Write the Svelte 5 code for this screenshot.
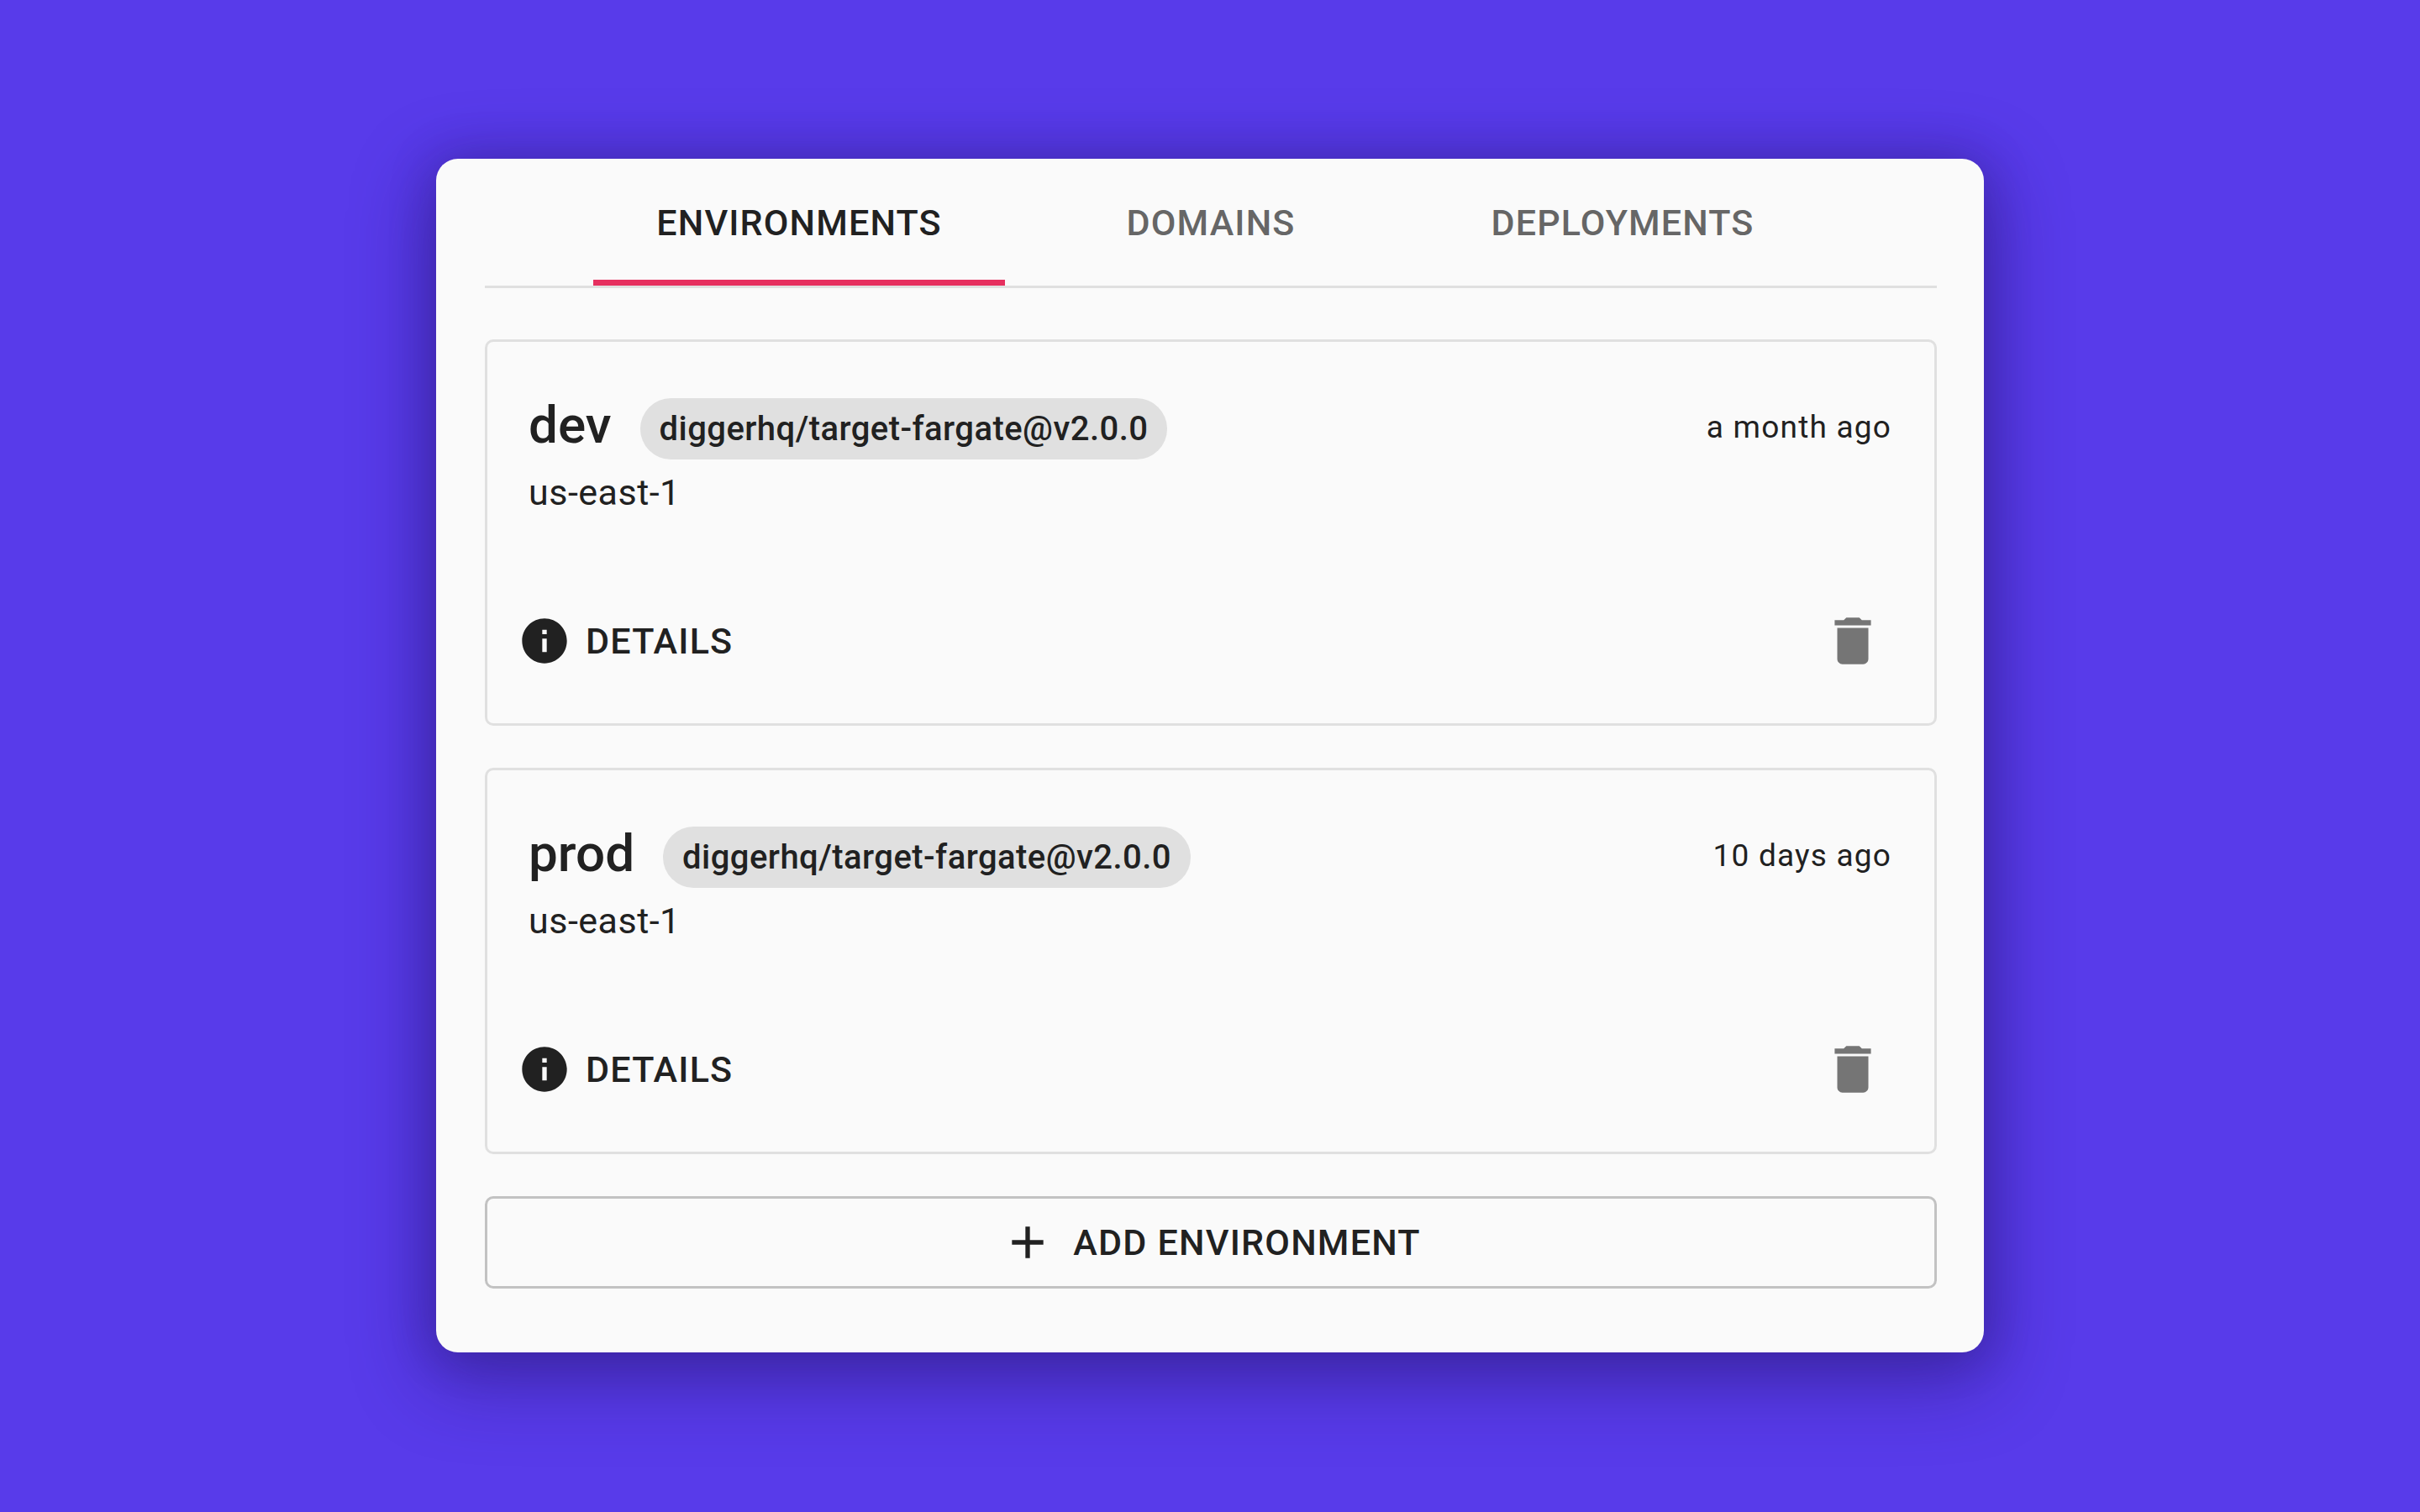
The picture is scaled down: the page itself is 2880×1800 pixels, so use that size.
<script>
  const envs = [
    { name: 'dev', version: 'diggerhq/target-fargate@v2.0.0', region: 'us-east-1', time: 'a month ago' },
    { name: 'prod', version: 'diggerhq/target-fargate@v2.0.0', region: 'us-east-1', time: '10 days ago' }
  ];
  const tabs = ['ENVIRONMENTS', 'DOMAINS', 'DEPLOYMENTS'];
</script>

<div class="page">
  <main class="panel">
    <nav class="tabs">
      {#each tabs as tab, i}
        <div class="tab" class:active={i === 0}>{tab}</div>
      {/each}
    </nav>
    <section class="list">
      {#each envs as env}
        <article class="env">
          <div class="head">
            <div class="title">
              <h2>{env.name}</h2>
              <span class="chip">{env.version}</span>
            </div>
            <span class="time">{env.time}</span>
          </div>
          <div class="region">{env.region}</div>
          <div class="actions">
            <div class="details">
              <svg class="info" viewBox="0 0 24 24"><path d="M12 2C6.48 2 2 6.48 2 12s4.48 10 10 10 10-4.48 10-10S17.52 2 12 2zm1 15h-2v-6h2v6zm0-8h-2V7h2v2z" /></svg>
              <span>DETAILS</span>
            </div>
            <svg class="trash" viewBox="0 0 24 24"><path d="M6 19c0 1.1.9 2 2 2h8c1.1 0 2-.9 2-2V7H6v12zM19 4h-3.5l-1-1h-5l-1 1H5v2h14V4z" /></svg>
          </div>
        </article>
      {/each}
      <div class="add">
        <svg class="plus" viewBox="0 0 24 24"><path d="M19 13h-6v6h-2v-6H5v-2h6V5h2v6h6v2z" /></svg>
        <span>ADD ENVIRONMENT</span>
      </div>
    </section>
  </main>
</div>

<style>
  :global(body) { margin: 0; background: #583bea; }
  .page {
    width: 2880px; height: 1800px; box-sizing: border-box; padding-top: 189px;
    display: flex; align-items: flex-start; justify-content: center;
    font-family: Roboto, sans-serif; color: #212121;
  }
  .panel {
    width: 1842px; height: 1421px; box-sizing: border-box; padding: 0 56px 0 58px;
    background: #fafafa; border-radius: 26px;
    box-shadow: 0 26px 90px 10px rgba(30, 15, 90, 0.42), 0 0 50px 8px rgba(30, 15, 90, 0.18);
  }
  .tabs {
    display: flex; justify-content: center; height: 154px; box-sizing: border-box;
    border-bottom: 3px solid #e0e0e0;
  }
  .tab {
    width: 490px; box-sizing: border-box; height: 151px; padding-top: 8px;
    display: flex; align-items: center; justify-content: center;
    font-size: 43px; font-weight: 500; letter-spacing: 1.15px; color: #666;
    border-bottom: 7px solid transparent;
  }
  .tab.active { color: #212121; border-bottom-color: #e6305f; }
  .list { display: flex; flex-direction: column; padding-top: 61px; }
  .env {
    height: 460px; box-sizing: border-box; margin-bottom: 50px;
    border: 3px solid #e0e0e0; border-radius: 10px;
    padding: 65px 51px 0 49px;
    display: flex; flex-direction: column;
  }
  .head { display: flex; align-items: center; justify-content: space-between; height: 76px; }
  .title { display: flex; align-items: center; }
  h2 { margin: 0; font-size: 62px; font-weight: 500; line-height: 1; position: relative; top: -4px; }
  .chip {
    margin-left: 34px; height: 73px; padding: 0 23px; border-radius: 37px;
    background: #e0e0e0; display: flex; align-items: center;
    font-size: 40px; font-weight: 500; letter-spacing: 0.45px;
  }
  .time { font-size: 37px; letter-spacing: 1.2px; color: #212121; position: relative; top: -2px; }
  .region { margin-top: 6px; font-size: 43px; letter-spacing: 0.5px; line-height: 64px; }
  .actions { margin-top: 113px; margin-left: -13px; display: flex; align-items: center; justify-content: space-between; height: 64px; }
  .details { display: flex; align-items: center; font-size: 43px; font-weight: 500; letter-spacing: 1.2px; }
  .info { width: 64px; height: 64px; fill: #212121; margin-right: 17px; }
  .trash { width: 74px; height: 74px; fill: #757575; margin-right: 9px; }
  .add {
    height: 110px; box-sizing: border-box; border: 3px solid #c2c2c2; border-radius: 10px;
    display: flex; align-items: center; justify-content: center;
    font-size: 43px; font-weight: 500; letter-spacing: 1.2px;
  }
  .plus { width: 64px; height: 64px; fill: #212121; margin-right: 22px; }
</style>
